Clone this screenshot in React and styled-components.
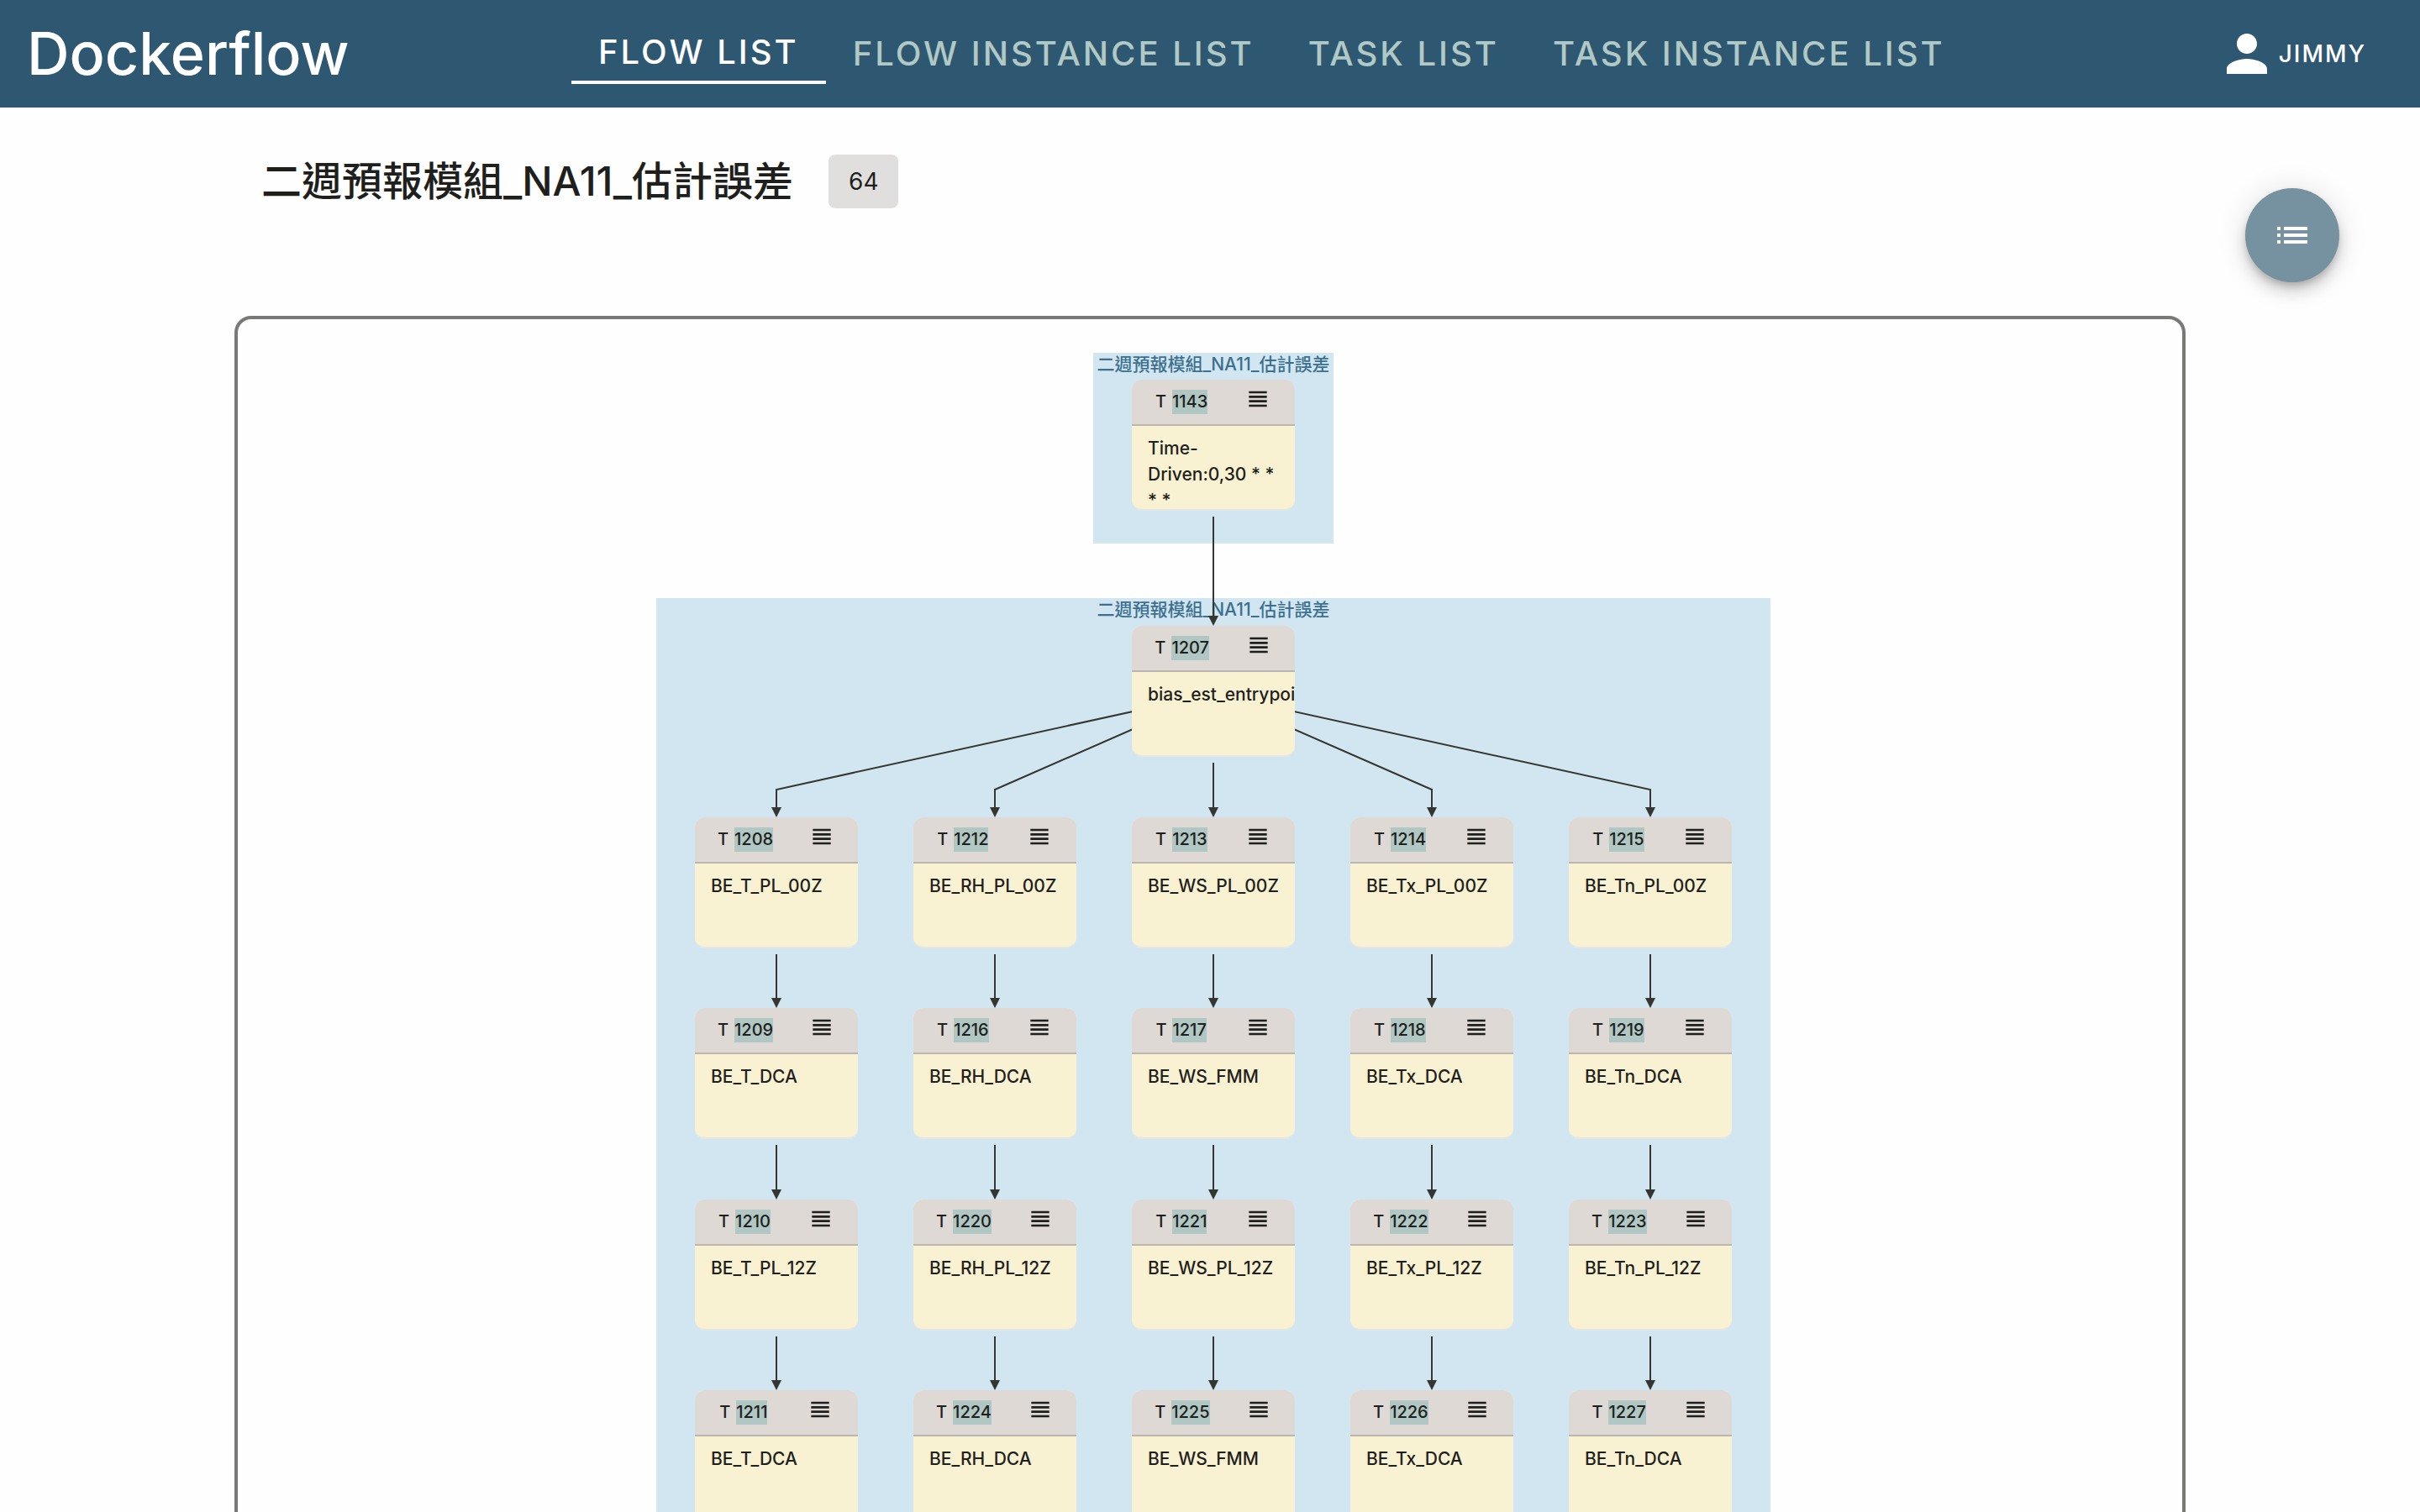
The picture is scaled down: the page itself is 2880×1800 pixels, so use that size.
import React from "react";
import styled, { createGlobalStyle } from "styled-components";
import { MdPerson, MdList, MdViewHeadline } from "react-icons/md";

const GlobalStyle = createGlobalStyle`
  *, *::before, *::after {
    box-sizing: border-box;
  }
  body {
    margin: 0;
    background: #fefefe;
    color: #1f1f1d;
    font-family: Inter, "Noto Sans CJK TC", sans-serif;
    font-weight: 500;
  }
  button {
    padding: 0;
    border: 0;
    background: none;
    color: inherit;
    font: inherit;
    cursor: pointer;
  }
`;

const Page = styled.div`
  display: flex;
  flex-direction: column;
  height: 100vh;
`;

const Header = styled.header`
  display: grid;
  grid-template-columns: 680px 1fr auto;
  align-items: center;
  flex: none;
  height: 128px;
  padding-right: 64px;
  background: #2e5772;
  color: #fff;
`;

const Logo = styled.a`
  padding-left: 32px;
  color: inherit;
  font-size: 70px;
  line-height: 88px;
  text-decoration: none;
`;

const Nav = styled.nav`
  display: flex;
  align-items: center;
`;

const Tab = styled.a`
  padding: 8px 32px;
  border-bottom: ${(p) => (p.$active ? "4px solid #fff" : "0")};
  color: ${(p) => (p.$active ? "#fff" : "#b1c9c4")};
  font-size: 40px;
  line-height: 52px;
  letter-spacing: 3px;
  text-decoration: none;
  white-space: nowrap;
`;

const UserButton = styled.button`
  display: flex;
  align-items: center;
  gap: 2px;
  font-size: 28px;
  letter-spacing: 2px;

  svg {
    width: 72px;
    height: 72px;
  }
`;

const Main = styled.main`
  flex: 1;
  min-height: 0;
  padding: 56px 279px 0;
  overflow-y: auto;
  scrollbar-width: none;
`;

const TitleRow = styled.div`
  display: flex;
  align-items: center;
  gap: 42px;
  margin-bottom: 128px;
  padding-left: 32px;
`;

const Title = styled.h1`
  margin: 0;
  font-size: 48px;
  font-weight: 500;
  line-height: 64px;
`;

const Badge = styled.span`
  padding: 0 24px;
  border-radius: 8px;
  background: #e0dfde;
  font-size: 28px;
  font-weight: 400;
  line-height: 64px;
`;

const Fab = styled.button`
  position: fixed;
  top: 224px;
  right: 96px;
  display: grid;
  place-items: center;
  width: 112px;
  height: 112px;
  border-radius: 50%;
  background: #76919f;
  color: #fff;
  box-shadow: 0 6px 10px -2px rgba(0, 0, 0, 0.2),
    0 12px 20px rgba(0, 0, 0, 0.14), 0 2px 36px rgba(0, 0, 0, 0.12);

  svg {
    width: 48px;
    height: 48px;
  }
`;

const Panel = styled.section`
  padding-top: 40px;
  border: 4px solid #797977;
  border-radius: 20px;
`;

const Canvas = styled.div`
  position: relative;
  width: 1334px;
  height: 1480px;
  margin: 0 auto;
`;

const Cluster = styled.div`
  position: absolute;
  left: ${(p) => p.$x}px;
  top: ${(p) => p.$y}px;
  width: ${(p) => p.$w}px;
  height: ${(p) => p.$h}px;
  background: #d2e6f1;
  color: #3c708e;
  font-size: 21px;
  line-height: 28px;
  text-align: center;
  white-space: nowrap;
`;

const Edges = styled.svg`
  position: absolute;
  inset: 0;
  width: 100%;
  height: 100%;
  fill: none;
  stroke: #353632;
  stroke-width: 2;
`;

const Card = styled.article`
  position: absolute;
  left: ${(p) => p.$x}px;
  top: ${(p) => p.$y}px;
  display: flex;
  flex-direction: column;
  width: 194px;
  height: 156px;
  overflow: hidden;
  border-bottom: 2px solid #e6e6e4;
  border-radius: 12px;
  background: #f9f2d2;
`;

const CardHeader = styled.header`
  display: flex;
  align-items: center;
  justify-content: space-around;
  flex: none;
  height: 55px;
  padding: 0 6px;
  border-bottom: 2px solid #bbb7b0;
  background: #ded9d5;
`;

const CardId = styled.span`
  display: flex;
  gap: 7px;
  font-size: 20px;
  line-height: 29px;
`;

const IdNumber = styled.span`
  background: #b0c7c3;
`;

const MenuButton = styled.button`
  display: flex;
  padding-bottom: 8px;

  svg {
    width: 32px;
    height: 32px;
  }
`;

const CardBody = styled.p`
  margin: 0;
  padding: 11px 19px;
  font-size: 21px;
  line-height: 31px;
`;

const FLOW_NAME = "二週預報模組_NA11_估計誤差";
const COLS = [54, 314, 574, 834, 1094];
const ROWS = [32, 325, 553, 780, 1008, 1235];
const CENTER = 97;
const CARD_HEIGHT = 156;

const TABS = ["FLOW LIST", "FLOW INSTANCE LIST", "TASK LIST", "TASK INSTANCE LIST"];

const CARDS = [
  [2, 0, 1143, "Time-Driven:0,30 * * * *"],
  [2, 1, 1207, "bias_est_entrypoint"],
  [0, 2, 1208, "BE_T_PL_00Z"],
  [1, 2, 1212, "BE_RH_PL_00Z"],
  [2, 2, 1213, "BE_WS_PL_00Z"],
  [3, 2, 1214, "BE_Tx_PL_00Z"],
  [4, 2, 1215, "BE_Tn_PL_00Z"],
  [0, 3, 1209, "BE_T_DCA"],
  [1, 3, 1216, "BE_RH_DCA"],
  [2, 3, 1217, "BE_WS_FMM"],
  [3, 3, 1218, "BE_Tx_DCA"],
  [4, 3, 1219, "BE_Tn_DCA"],
  [0, 4, 1210, "BE_T_PL_12Z"],
  [1, 4, 1220, "BE_RH_PL_12Z"],
  [2, 4, 1221, "BE_WS_PL_12Z"],
  [3, 4, 1222, "BE_Tx_PL_12Z"],
  [4, 4, 1223, "BE_Tn_PL_12Z"],
  [0, 5, 1211, "BE_T_DCA"],
  [1, 5, 1224, "BE_RH_DCA"],
  [2, 5, 1225, "BE_WS_FMM"],
  [3, 5, 1226, "BE_Tx_DCA"],
  [4, 5, 1227, "BE_Tn_DCA"],
];

// [column, row] of the card above each straight arrow
const STRAIGHT = [
  [2, 0],
  [2, 1],
  ...[2, 3, 4].flatMap((row) => COLS.map((_, col) => [col, row])),
];

function Arrow({ d, x, y }) {
  return (
    <>
      <path d={d} />
      <path d={`M${x - 6} ${y - 12}h12l-6 12z`} fill="#353632" stroke="none" />
    </>
  );
}

function FlowEdges() {
  const midX = COLS[2] + CENTER;
  return (
    <Edges aria-hidden="true">
      {STRAIGHT.map(([col, row]) => {
        const x = COLS[col] + CENTER;
        const end = ROWS[row + 1];
        return (
          <Arrow
            key={`${col}-${row}`}
            x={x}
            y={end}
            d={`M${x} ${ROWS[row] + CARD_HEIGHT + 7}V${end - 4}`}
          />
        );
      })}
      {[0, 1, 3, 4].map((col) => {
        const x = COLS[col] + CENTER;
        const end = ROWS[2];
        return (
          <Arrow
            key={col}
            x={x}
            y={end}
            d={`M${midX} ${ROWS[1] + 81}L${x} ${end - 33}V${end - 4}`}
          />
        );
      })}
    </Edges>
  );
}

function TaskCard({ x, y, id, name }) {
  return (
    <Card $x={x} $y={y}>
      <CardHeader>
        <CardId>
          T <IdNumber>{id}</IdNumber>
        </CardId>
        <MenuButton type="button" aria-label={`Task ${id} menu`}>
          <MdViewHeadline />
        </MenuButton>
      </CardHeader>
      <CardBody>{name}</CardBody>
    </Card>
  );
}

export default function App() {
  return (
    <Page>
      <GlobalStyle />
      <Header>
        <Logo href="#">Dockerflow</Logo>
        <Nav>
          {TABS.map((tab, i) => (
            <Tab key={tab} href="#" $active={i === 0}>
              {tab}
            </Tab>
          ))}
        </Nav>
        <UserButton type="button">
          <MdPerson />
          JIMMY
        </UserButton>
      </Header>
      <Main>
        <TitleRow>
          <Title>{FLOW_NAME}</Title>
          <Badge>64</Badge>
        </TitleRow>
        <Panel>
          <Canvas>
            <Cluster $x={528} $y={0} $w={286} $h={227}>
              {FLOW_NAME}
            </Cluster>
            <Cluster $x={8} $y={292} $w={1326} $h={1140}>
              {FLOW_NAME}
            </Cluster>
            <FlowEdges />
            {CARDS.map(([col, row, id, name]) => (
              <TaskCard key={id} x={COLS[col]} y={ROWS[row]} id={id} name={name} />
            ))}
          </Canvas>
        </Panel>
      </Main>
      <Fab type="button" aria-label="Flow menu">
        <MdList />
      </Fab>
    </Page>
  );
}
